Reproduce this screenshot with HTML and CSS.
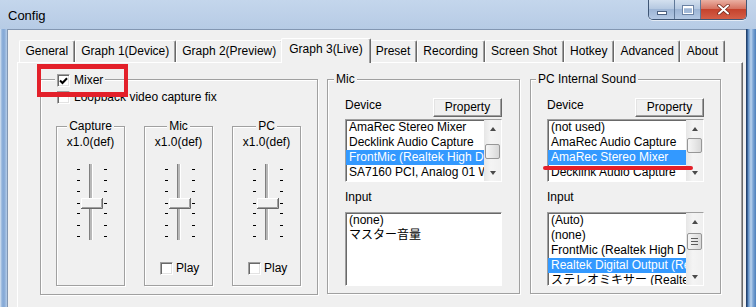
FILE: index.html
```html
<!DOCTYPE html>
<html lang="en">
<head>
<meta charset="UTF-8">
<title>Config</title>
<link rel="stylesheet" href="styles.css">
</head>
<body>
<div class="window">
    <div class="titlebar">
        <div class="title">Config</div>
        <div class="caption">
            <span class="cap-btn cap-min"><i></i></span>
            <span class="cap-btn cap-max"><i></i></span>
            <span class="cap-btn cap-close">
                <svg width="13" height="11" viewBox="0 0 13 11"><path d="M2 1.5l9 8M11 1.5l-9 8" stroke="#6e2418" stroke-width="3.4" stroke-linecap="round"/><path d="M2 1.5l9 8M11 1.5l-9 8" stroke="#fff" stroke-width="2" stroke-linecap="round"/></svg>
            </span>
        </div>
    </div>

    <div class="frame">
        <div class="frame-left"></div>
        <div class="client">
            <div class="tabs">
                <div class="tab">General</div>
                <div class="tab">Graph 1(Device)</div>
                <div class="tab">Graph 2(Preview)</div>
                <div class="tab active">Graph 3(Live)</div>
                <div class="tab">Preset</div>
                <div class="tab">Recording</div>
                <div class="tab">Screen Shot</div>
                <div class="tab">Hotkey</div>
                <div class="tab">Advanced</div>
                <div class="tab">About</div>
            </div>

            <div class="panel">
                <!-- Mixer -->
                <div class="group mixer">
                    <div class="group-title mixer-title">
                        <span class="check"><svg width="9" height="8" viewBox="0 0 9 8"><path d="M1 3.5l2.5 2.5L8 1.2" stroke="#000" stroke-width="2" fill="none"/></svg></span>Mixer
                    </div>
                    <div class="checkrow loopback"><span class="check"></span>Loopback video capture fix</div>

                    <div class="sliders">
                        <div class="group fader">
                            <div class="group-title center">Capture</div>
                            <div class="gain">x1.0(def)</div>
                            <svg class="slider" width="40" height="80" viewBox="0 0 40 80">
                                <path d="M6 7.5h3M6 18.5h3M6 29.5h3M6 41.5h3M6 51.5h3M6 63.5h3M6 74.5h3M33 7.5h3M33 18.5h3M33 29.5h3M33 41.5h3M33 51.5h3M33 63.5h3M33 74.5h3" stroke="#000"/>
                                <rect x="18" y="2" width="4" height="76" fill="#b8b8b8"/>
                                <path d="M18.5 2v76" stroke="#808080"/><path d="M21.5 2v76" stroke="#fff"/>
                                <rect x="10" y="36" width="22" height="11" fill="#f2f2f2"/>
                                <path d="M10.5 46V36.5H31" stroke="#fff" fill="none"/>
                                <path d="M10 46.5H31.5V36" stroke="#696969" fill="none"/>
                                <path d="M11 45.5H30.5V37" stroke="#a0a0a0" fill="none"/>
                            </svg>
                        </div>
                        <div class="group fader">
                            <div class="group-title center">Mic</div>
                            <div class="gain">x1.0(def)</div>
                            <svg class="slider" width="40" height="80" viewBox="0 0 40 80">
                                <path d="M6 7.5h3M6 18.5h3M6 29.5h3M6 41.5h3M6 51.5h3M6 63.5h3M6 74.5h3M33 7.5h3M33 18.5h3M33 29.5h3M33 41.5h3M33 51.5h3M33 63.5h3M33 74.5h3" stroke="#000"/>
                                <rect x="18" y="2" width="4" height="76" fill="#b8b8b8"/>
                                <path d="M18.5 2v76" stroke="#808080"/><path d="M21.5 2v76" stroke="#fff"/>
                                <rect x="10" y="36" width="22" height="11" fill="#f2f2f2"/>
                                <path d="M10.5 46V36.5H31" stroke="#fff" fill="none"/>
                                <path d="M10 46.5H31.5V36" stroke="#696969" fill="none"/>
                                <path d="M11 45.5H30.5V37" stroke="#a0a0a0" fill="none"/>
                            </svg>
                            <div class="checkrow play"><span class="check"></span>Play</div>
                        </div>
                        <div class="group fader">
                            <div class="group-title center">PC</div>
                            <div class="gain">x1.0(def)</div>
                            <svg class="slider" width="40" height="80" viewBox="0 0 40 80">
                                <path d="M6 7.5h3M6 18.5h3M6 29.5h3M6 41.5h3M6 51.5h3M6 63.5h3M6 74.5h3M33 7.5h3M33 18.5h3M33 29.5h3M33 41.5h3M33 51.5h3M33 63.5h3M33 74.5h3" stroke="#000"/>
                                <rect x="18" y="2" width="4" height="76" fill="#b8b8b8"/>
                                <path d="M18.5 2v76" stroke="#808080"/><path d="M21.5 2v76" stroke="#fff"/>
                                <rect x="10" y="36" width="22" height="11" fill="#f2f2f2"/>
                                <path d="M10.5 46V36.5H31" stroke="#fff" fill="none"/>
                                <path d="M10 46.5H31.5V36" stroke="#696969" fill="none"/>
                                <path d="M11 45.5H30.5V37" stroke="#a0a0a0" fill="none"/>
                            </svg>
                            <div class="checkrow play"><span class="check"></span>Play</div>
                        </div>
                    </div>

                    <div class="annot-box"></div>
                </div>

                <!-- Mic -->
                <div class="group audio mic">
                    <div class="group-title">Mic</div>
                    <div class="col">
                        <div class="device-row">
                            <span class="field-name">Device</span>
                            <span class="button">Property</span>
                        </div>
                        <div class="listbox device-list">
                            <div class="items">
                                <div class="item">AmaRec Stereo Mixer</div>
                                <div class="item">Decklink Audio Capture</div>
                                <div class="item sel">FrontMic (Realtek High Definition Audio)</div>
                                <div class="item">SA7160 PCI, Analog 01 WaveIn</div>
                            </div>
                            <div class="scrollbar">
                                <span class="sb-arrow up"></span>
                                <span class="sb-track"><span class="sb-thumb pos-mid"></span></span>
                                <span class="sb-arrow down"></span>
                            </div>
                        </div>
                        <div class="field-name input-label">Input</div>
                        <div class="listbox input-list">
                            <div class="items">
                                <div class="item">(none)</div>
                                <div class="item">マスター音量</div>
                            </div>
                        </div>
                    </div>
                </div>

                <!-- PC Internal Sound -->
                <div class="group audio pc">
                    <div class="group-title">PC Internal Sound</div>
                    <div class="col">
                        <div class="device-row">
                            <span class="field-name">Device</span>
                            <span class="button">Property</span>
                        </div>
                        <div class="listbox device-list">
                            <div class="items">
                                <div class="item">(not used)</div>
                                <div class="item">AmaRec Audio Capture</div>
                                <div class="item sel">AmaRec Stereo Mixer</div>
                                <div class="item">Decklink Audio Capture</div>
                            </div>
                            <div class="scrollbar">
                                <span class="sb-arrow up"></span>
                                <span class="sb-track"><span class="sb-thumb pos-top"></span></span>
                                <span class="sb-arrow down"></span>
                            </div>
                        </div>
                        <div class="field-name input-label">Input</div>
                        <div class="listbox input-list">
                            <div class="items">
                                <div class="item">(Auto)</div>
                                <div class="item">(none)</div>
                                <div class="item">FrontMic (Realtek High Definition Audio)</div>
                                <div class="item sel">Realtek Digital Output (Realtek High Definition Audio)</div>
                                <div class="item">ステレオミキサー (Realtek High Definition Audio)</div>
                            </div>
                            <div class="scrollbar">
                                <span class="sb-arrow up"></span>
                                <span class="sb-track"><span class="sb-thumb pos-input grip"></span></span>
                                <span class="sb-arrow down"></span>
                            </div>
                        </div>
                    </div>
                    <div class="underline"></div>
                </div>
            </div>
        </div>
        <div class="frame-right"></div>
    </div>
</div>
</body>
</html>
```

FILE: styles.css
```css
* {
    box-sizing: border-box;
}
body {
    margin: 0;
    width: 756px;
    height: 307px;
    overflow: hidden;
    font: 12px "Liberation Sans", Arial, "Noto Sans CJK JP", sans-serif;
    color: #000;
    background: linear-gradient(#c4d6ec, #b6cbe5 30px, #a9c1df);
}
.window {
    display: flex;
    flex-direction: column;
    height: 307px;
}

/* title bar */
.titlebar {
    display: flex;
    height: 29px;
    flex: none;
}
.title {
    padding: 8px 0 0 8px;
    font-size: 13px;
    line-height: 15px;
}
.caption {
    display: flex;
    margin-left: auto;
    margin-right: 9px;
    height: 20px;
    border: 1px solid #3f5675;
    border-top: 0;
    border-radius: 0 0 5px 5px;
    overflow: hidden;
    box-shadow: 0 1px 0 rgba(255,255,255,.6);
}
.cap-btn {
    width: 26px;
    display: flex;
    align-items: center;
    justify-content: center;
    border-right: 1px solid #5f7898;
    background: linear-gradient(#d3e0ef, #b6c9e1 45%, #9db5d5 50%, #b3c8e3);
}
.cap-min i {
    display: block;
    width: 10px;
    height: 4px;
    margin-top: 6px;
    background: #fff;
    border: 1px solid #4c6180;
}
.cap-max i {
    display: block;
    width: 10px;
    height: 8px;
    border: 1px solid #fff;
    border-top-width: 2px;
    box-shadow: 0 0 0 1px #6b82a3;
}
.cap-close {
    width: 45px;
    border-right: 0;
    background: linear-gradient(#eab0a2, #d67462 45%, #c5432d 50%, #d45f48);
}

/* frame */
.frame {
    display: flex;
    flex: 1;
}
.frame-left {
    width: 7px;
    background: linear-gradient(to right, #d8e4f2, #8fb1da 2px, #84a8d6 4px, #b5cde9 7px);
}
.frame-right {
    width: 10px;
    background: linear-gradient(to right, #23426e 0, #23426e 1px, #5687c0 2px, #bcd4ee 5px, #7ea7d6 7px, #4d7fba 10px);
}
.client {
    width: 739px;
    background: #f0f0f0;
    border-top: 1px solid #8397b2;
    border-left: 1px solid #8397b2;
    padding: 8px 0 0 9px;
}

/* tabs */
.tabs {
    display: flex;
    align-items: flex-end;
    height: 24px;
    padding-left: 2px;
}
.tab {
    height: 22px;
    line-height: 21px;
    padding: 0 5.5px;
    white-space: nowrap;
    border-top: 1px solid #fff;
    border-left: 1px solid #fff;
    border-right: 1px solid #696969;
    box-shadow: inset -1px 0 #a0a0a0;
    border-radius: 2px 2px 0 0;
}
.tab.active {
    position: relative;
    z-index: 1;
    height: 25px;
    margin: 0 -2px -1px;
    padding: 0 7.5px 3px;
    background: #f0f0f0;
}
.panel {
    display: flex;
    align-items: flex-start;
    width: 726px;
    height: 260px;
    padding: 16px 0 0 22px;
    border-top: 1px solid #fff;
    border-left: 1px solid #fff;
    border-right: 1px solid #696969;
    box-shadow: inset -1px 0 #a0a0a0;
}

/* group boxes */
.group {
    position: relative;
    border: 1px solid #a0a0a0;
    box-shadow: inset 1px 1px #fff, 1px 1px #fff;
}
.group-title {
    position: absolute;
    top: -8px;
    left: 6px;
    padding: 0 2px;
    line-height: 15px;
    background: #f0f0f0;
    white-space: nowrap;
}
.group-title.center {
    left: 0;
    right: 0;
    width: fit-content;
    margin: 0 auto;
}

.check {
    flex: none;
    display: flex;
    align-items: center;
    justify-content: center;
    width: 13px;
    height: 13px;
    background: #fff;
    border: 1px solid;
    border-color: #a0a0a0 #fff #fff #a0a0a0;
    box-shadow: inset 1px 1px #696969, inset -1px -1px #e3e3e3;
}
.checkrow {
    display: flex;
    align-items: center;
    gap: 4px;
    height: 15px;
    line-height: 15px;
}

.mixer {
    width: 278px;
    height: 216px;
    padding: 10px 0 0 15px;
}
.mixer-title {
    top: -7px;
    left: 14px;
    display: flex;
    align-items: center;
    gap: 4px;
}
.loopback {
    margin-left: 1px;
}
.sliders {
    display: flex;
    gap: 19px;
    margin-top: 21px;
}
.fader {
    display: flex;
    flex-direction: column;
    align-items: center;
    width: 69px;
    height: 160px;
    padding-top: 8px;
}
.gain {
    line-height: 15px;
}
.slider {
    display: block;
    margin-top: 12px;
}
.play {
    align-self: flex-start;
    margin: 19px 0 0 15px;
    gap: 3px;
}
.annot-box {
    position: absolute;
    z-index: 2;
    left: -4px;
    top: -16px;
    width: 91px;
    height: 33px;
    border: 5px solid #e3202a;
    border-left-width: 4px;
    border-right-width: 4px;
}

/* Mic / PC groups */
.audio {
    display: flex;
    flex-direction: column;
    align-items: center;
    height: 215px;
    padding-top: 18px;
}
.mic {
    width: 193px;
    margin-left: 9px;
}
.pc {
    width: 191px;
    margin-left: 10px;
}
.pc .group-title {
    left: 5px;
}
.col {
    width: 157px;
}
.device-row {
    display: flex;
    justify-content: space-between;
    align-items: flex-start;
}
.field-name {
    line-height: 15px;
}
.button {
    width: 69px;
    height: 19px;
    line-height: 17px;
    text-align: center;
    background: #f0f0f0;
    border: 1px solid;
    border-color: #fff #696969 #696969 #fff;
    box-shadow: inset -1px -1px #a0a0a0, inset 1px 1px #e3e3e3;
}
.input-label {
    margin-top: 8px;
}
.listbox {
    display: flex;
    background: #fff;
    border: 1px solid;
    border-color: #a0a0a0 #fff #fff #a0a0a0;
    box-shadow: inset 1px 1px #696969;
}
.device-list {
    margin-top: 2px;
    height: 63px;
}
.input-list {
    margin-top: 7px;
    height: 74px;
}
.items {
    flex: 1;
    min-width: 0;
    overflow: hidden;
}
.item {
    height: 15px;
    line-height: 15px;
    padding-left: 3px;
    white-space: nowrap;
    overflow: hidden;
}
.item.sel {
    background: #3399ff;
    color: #fff;
}

/* scrollbar */
.scrollbar {
    flex: none;
    display: flex;
    flex-direction: column;
    width: 17px;
    background: linear-gradient(to right, #e6e6e6, #f4f4f4 40%, #efefef);
}
.sb-arrow {
    flex: none;
    height: 17px;
    display: flex;
    align-items: center;
    justify-content: center;
}
.sb-arrow::before {
    content: "";
    border-left: 3.5px solid transparent;
    border-right: 3.5px solid transparent;
    border-bottom: 4px solid #4a4a4a;
}
.sb-arrow.down::before {
    border-bottom: 0;
    border-top: 4px solid #4a4a4a;
}
.sb-track {
    flex: 1;
}
.sb-thumb {
    display: flex;
    align-items: center;
    justify-content: center;
    height: 15px;
    margin: 0 1px;
    border: 1px solid #979797;
    border-radius: 2px;
    background: linear-gradient(to right, #f6f6f6, #e8e8e8 50%, #d8d8d8);
}
.pos-mid { margin-top: 7px; }
.pos-top { margin-top: 1px; }
.pos-input { margin-top: 3px; height: 17px; }
.grip::after {
    content: "";
    width: 7px;
    height: 1px;
    background: #5a5a5a;
    box-shadow: 0 3px #5a5a5a, 0 -3px #5a5a5a;
}
.underline {
    position: absolute;
    left: 12px;
    top: 86px;
    width: 150px;
    height: 4px;
    border-radius: 2px;
    background: #e3202a;
}
```
